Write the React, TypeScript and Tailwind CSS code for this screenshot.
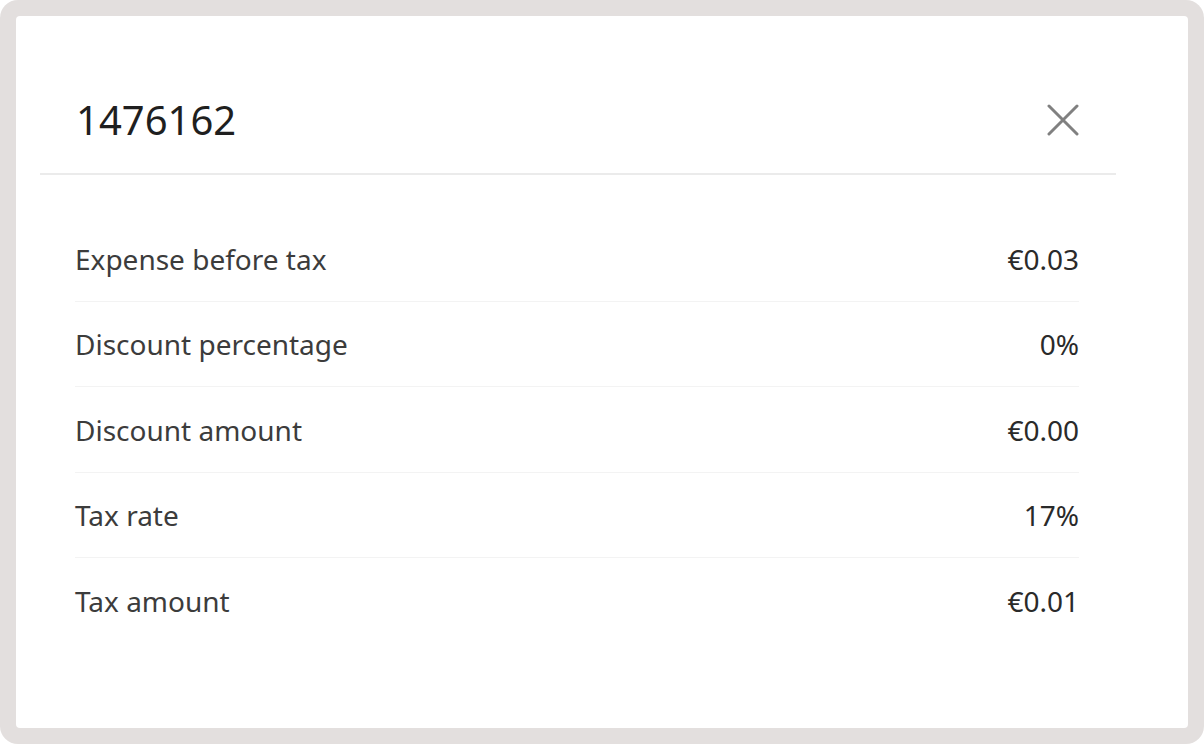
import React from "react";

const rows: [string, string][] = [
  ["Expense before tax", "€0.03"],
  ["Discount percentage", "0%"],
  ["Discount amount", "€0.00"],
  ["Tax rate", "17%"],
  ["Tax amount", "€0.01"],
];

export default function App() {
  return (
    <div
      className="w-[1204px] h-[744px] bg-white"
      style={{ fontFamily: '"Noto Sans", "Open Sans", sans-serif' }}
    >
      <div className="w-full h-full rounded-[18px] bg-[#e3dfde] p-4">
        <div className="w-full h-full rounded-[4px] bg-white pt-6 pl-6 pr-[72px]">
          <div className="flex items-center justify-between pl-[36px] pr-[37px] pt-[52px] pb-[25px] border-b-2 border-[#ebebeb]">
            <div className="text-[40px] leading-[56px] text-[#1f1f1f]">1476162</div>
            <svg width="32" height="32" viewBox="0 0 32 32" className="shrink-0">
              <path
                d="M2 2 L30 30 M30 2 L2 30"
                stroke="#808080"
                strokeWidth="3"
                strokeLinecap="round"
                fill="none"
              />
            </svg>
          </div>
          <div className="pl-[35px] pr-[37px] pt-[41px]">
            {rows.map(([label, value], i) => (
              <div
                key={label}
                className={
                  "flex items-center justify-between h-[85.5px] pt-[1px] text-[28px] text-[#3c3c3c] " +
                  (i < rows.length - 1 ? "border-b border-[#f3f3f3]" : "")
                }
              >
                <span>{label}</span>
                <span className="text-[#2a2a2a]">{value}</span>
              </div>
            ))}
          </div>
        </div>
      </div>
    </div>
  );
}
